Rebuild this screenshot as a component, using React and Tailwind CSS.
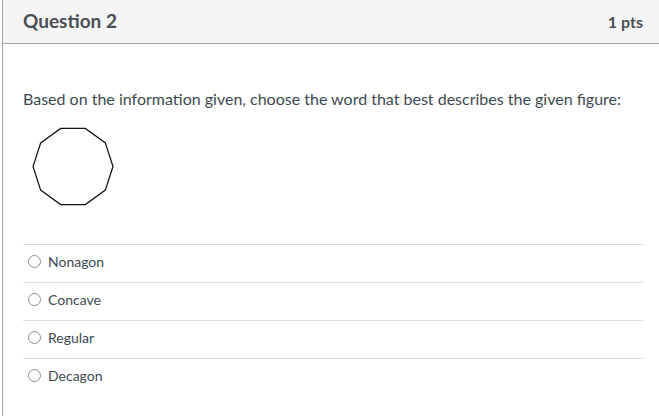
import React from "react";

const answers = ["Nonagon", "Concave", "Regular", "Decagon"];

function Decagon() {
  // regular decagon, flat top and bottom
  const cx = 41, cy = 39.5, r = 40;
  const pts = [];
  for (let k = 0; k < 10; k++) {
    const a = (k * 36 * Math.PI) / 180;
    pts.push(`${(cx + r * Math.cos(a)).toFixed(2)},${(cy - r * Math.sin(a)).toFixed(2)}`);
  }
  return (
    <svg width="82" height="79" viewBox="0 0 82 79">
      <polygon points={pts.join(" ")} fill="none" stroke="#111" strokeWidth="1.2" />
    </svg>
  );
}

export default function App() {
  return (
    <div className="min-h-[416px] w-[659px] bg-white pl-[2px] font-['Lato',sans-serif] text-[#2d3b45]">
      <div className="min-h-[416px] border-l border-l-[#a5a5a5]">
        <div className="flex h-[44px] items-center justify-between border-b border-[#a5a5a5] bg-[#f5f5f5] pl-[20px] pr-[16px]">
          <h2 className="text-[19px] font-bold text-[#4a4f53]">Question 2</h2>
          <span className="text-[16px] font-bold text-[#4a4f53]">1 pts</span>
        </div>
        <div className="pl-[20px] pr-[16px] pt-[45px]">
          <p className="text-[16px] leading-[20px] text-[#3d4a52]">
            Based on the information given, choose the word that best describes the given figure:
          </p>
          <div className="mt-[18px] pl-[9px]">
            <Decagon />
          </div>
          <div className="mt-[38px]">
            {answers.map((a) => (
              <div key={a} className="flex h-[38px] items-center border-t border-[#dddddd] pb-[4px] pl-[5px]">
                <span className="mr-[7px] h-[13px] w-[13px] rounded-full border border-[#8a8f93] bg-white" />
                <span className="text-[14px] text-[#3d4a52]">{a}</span>
              </div>
            ))}
          </div>
        </div>
      </div>
    </div>
  );
}
